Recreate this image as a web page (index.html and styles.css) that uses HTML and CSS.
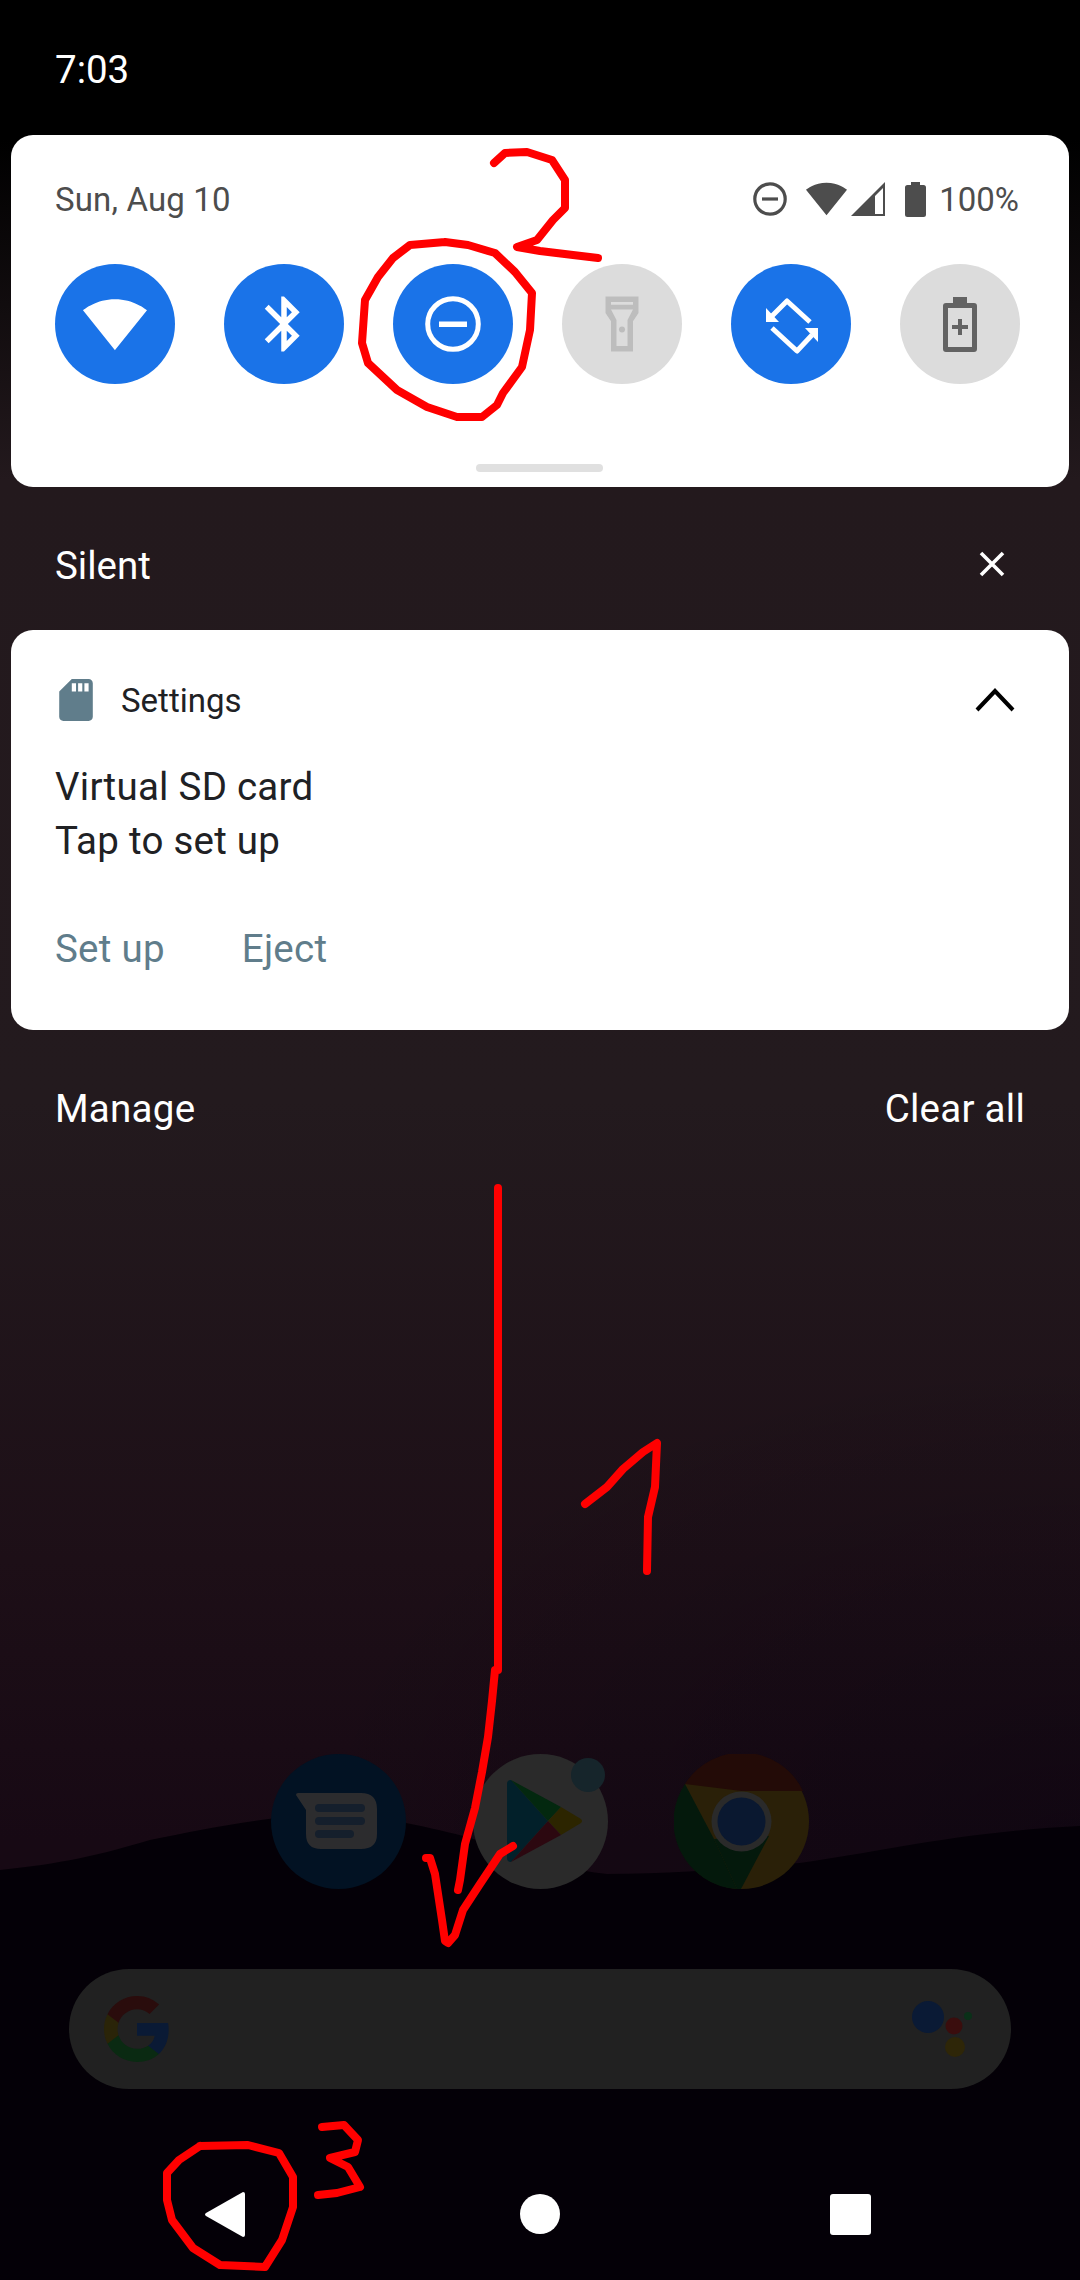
FILE: index.html
```html
<!doctype html>
<html>
<head>
<meta charset="utf-8">
<title>Notification shade</title>
<link rel="stylesheet" href="styles.css">
</head>
<body>
<svg class="wallpaper" viewBox="0 0 1080 2280">
  <path class="hill" d="M0 1870C60 1864 100 1855 150 1840C200 1830 260 1818 310 1815C360 1812 420 1825 463 1836C520 1852 560 1870 607 1874C680 1874 740 1868 800 1863C880 1852 960 1832 1080 1826V2280H0z"/>
</svg>

<div class="statusbar">7:03</div>

<section class="panel">
  <div class="panel-head">
    <span class="date">Sun, Aug 10</span>
    <div class="sysicons">
      <svg class="sys-dnd" viewBox="0 0 34 34"><circle cx="17" cy="17" r="15.2" fill="none" stroke="#4d4d4d" stroke-width="3.2"/><rect x="9" y="15.4" width="16" height="3.2" fill="#4d4d4d"/></svg>
      <svg class="sys-wifi" viewBox="0.36 3 23.28 18.5"><path fill="#4d4d4d" d="M12.01 21.49L23.64 7c-.45-.34-4.93-4-11.64-4C5.28 3 .81 6.66.36 7l11.64 14.5.01-.01z"/></svg>
      <svg class="sys-signal" viewBox="0 0 34 34"><path fill="#4d4d4d" fill-rule="evenodd" d="M34 0V34H0zM32 6L24 14V32H32z"/></svg>
      <svg class="sys-batt" viewBox="0 0 21 35"><path fill="#4d4d4d" d="M6 0h9v3h3.5q2.5 0 2.5 2.5V32.5q0 2.5-2.500 2.500H2.500Q0 35 0 32.500V5.500Q0 3 2.500 3H6z"/></svg>
      <span class="pct">100%</span>
    </div>
  </div>

  <div class="tiles">
    <div class="tile on">
      <svg viewBox="0 0 24 24"><path d="M12.010 21.490L23.640 7c-.45-.34-4.930-4-11.640-4C5.280 3 .81 6.660.36 7l11.640 14.500.01-.01z"/></svg>
    </div>
    <div class="tile on">
      <svg viewBox="0 0 24 24"><path d="M17.710 7.710L12 2h-1v7.590L6.410 5 5 6.410 10.590 12 5 17.590 6.410 19 11 14.410V22h1l5.710-5.710-4.300-4.290 4.300-4.290zM13 5.830l1.880 1.880L13 9.590V5.830zm1.880 10.460L13 18.170v-3.760l1.880 1.880z"/></svg>
    </div>
    <div class="tile on">
      <svg viewBox="0 0 66 66"><circle cx="33" cy="33" r="25.300" fill="none" stroke="#fff" stroke-width="5"/><rect x="19" y="30.500" width="28" height="5.500" fill="#fff"/></svg>
    </div>
    <div class="tile">
      <svg viewBox="0 0 24 24"><path fill="#bdbdbd" fill-rule="evenodd" d="M6 2h12v6l-2 3v11H8V11L6 8zM8 4v1h8V4zM8 6.700L10 10.500V20h4V10.500L16 6.700z"/><circle cx="12" cy="14" r="1.100" fill="#bdbdbd"/></svg>
    </div>
    <div class="tile on">
      <svg viewBox="0 0 66 66"><path fill="none" stroke="#fff" stroke-width="5" stroke-linejoin="round" d="M14 25L29 10L52 31M14 37L39 60L54 44"/><path fill="#fff" d="M8 17V31H21zM60 37V51L47 37z"/></svg>
    </div>
    <div class="tile">
      <svg viewBox="0 0 66 66"><path fill="#636363" fill-rule="evenodd" d="M26 6h14v6h7q3 0 3 3V58q0 3-3 3H19q-3 0-3-3V15q0-3 3-3h7zM21 17V56H45V17zM31 28h4v6h6v4h-6v6h-4v-6h-6v-4h6z"/></svg>
    </div>
  </div>
  <div class="handle"></div>
</section>

<div class="section-head">
  <span>Silent</span>
  <svg class="close" viewBox="0 0 26 26"><path d="M2 2L24 24M24 2L2 24" stroke="#fff" stroke-width="3.600" fill="none"/></svg>
</div>

<section class="card">
  <div class="card-app">
    <svg class="sd" viewBox="4 2 16 20"><path d="M18 2h-8L4.020 8 4 20c0 1.100.9 2 2 2h12c1.100 0 2-.9 2-2V4c0-1.100-.9-2-2-2zm-6 6h-2V4h2v4zm3 0h-2V4h2v4zm3 0h-2V4h2v4z"/></svg>
    <span class="app-name">Settings</span>
    <svg class="chevron" viewBox="0 0 40 24"><path d="M2 22L20 3L38 22" fill="none" stroke="#000" stroke-width="4"/></svg>
  </div>
  <div class="card-title">Virtual SD card</div>
  <div class="card-text">Tap to set up</div>
  <div class="card-actions">
    <span>Set up</span>
    <span>Eject</span>
  </div>
</section>

<div class="shade-foot">
  <span>Manage</span>
  <span>Clear all</span>
</div>

<div class="home">
  <div class="hotseat">
    <div class="app">
      <svg viewBox="0 0 135 135">
        <circle cx="67.500" cy="67.500" r="67.500" fill="#021223"/>
        <path fill="#2c2c2e" d="M27 39H90q16 0 16 16V80q0 15-16 15H50q-15 0-15-15V56L25 41q0-2 2-2z"/>
        <g fill="#151f2c"><rect x="44" y="50" width="50" height="8" rx="4"/><rect x="44" y="63" width="50" height="8" rx="4"/><rect x="44" y="76" width="39" height="8" rx="4"/></g>
      </svg>
    </div>
    <div class="app">
      <svg viewBox="0 0 135 135">
        <circle cx="67.500" cy="67.500" r="67.500" fill="#2a2a2a"/>
        <path fill="#02202a" d="M34 30Q34 26 38 26L75 67L38 108Q34 108 34 104z"/>
        <path fill="#03280f" d="M38 26L88 53L75 67z"/>
        <path fill="#2c2500" d="M88 53L108 65Q110 67 108 69L88 81L75 67z"/>
        <path fill="#2c0810" d="M88 81L38 108L75 67z"/>
      </svg>
      <span class="badge"></span>
    </div>
    <div class="app">
      <svg viewBox="0 0 135 135">
        <circle cx="67.500" cy="67.500" r="67.500" fill="#2a2008"/>
        <path fill="#230b07" d="M11 30A67.500 67.500 0 0 1 129 37H67.500z"/>
        <path fill="#04190c" d="M11 30L40 85L63 135A67.500 67.500 0 0 1 11 30z"/>
        <path fill="#04190c" d="M40 85L63 135L67 135L95 82z"/>
        <circle cx="67.500" cy="67.500" r="30" fill="#2a2a2a"/>
        <circle cx="67.500" cy="67.500" r="24" fill="#0a1830"/>
      </svg>
    </div>
  </div>

  <div class="search">
    <svg class="g" viewBox="2 2 44 44">
      <path fill="#0a1a35" d="M45.120 24.500c0-1.560-.14-3.060-.4-4.500H24v8.510h11.840c-.51 2.750-2.060 5.080-4.390 6.640v5.520h7.110c4.160-3.830 6.560-9.470 6.560-16.170z"/>
      <path fill="#0a2a12" d="M24 46c5.940 0 10.920-1.970 14.560-5.330l-7.110-5.520c-1.970 1.320-4.490 2.100-7.450 2.100-5.730 0-10.580-3.870-12.310-9.070H4.340v5.700C7.960 41.070 15.400 46 24 46z"/>
      <path fill="#2a2408" d="M11.690 28.180C11.250 26.860 11 25.450 11 24s.25-2.860.69-4.180v-5.700H4.340C2.850 17.090 2 20.450 2 24c0 3.550.85 6.910 2.340 9.880l7.350-5.700z"/>
      <path fill="#2a0c0c" d="M24 10.750c3.230 0 6.130 1.110 8.410 3.290l6.310-6.310C34.910 4.180 29.930 2 24 2 15.400 2 7.960 6.930 4.340 14.120l7.350 5.700c1.730-5.200 6.580-9.070 12.310-9.070z"/>
    </svg>
    <svg class="assistant" viewBox="0 0 60 64">
      <circle cx="16" cy="16" r="16" fill="#0a1a35"/>
      <circle cx="42" cy="25" r="8.500" fill="#3a0d0d"/>
      <circle cx="43" cy="46" r="10" fill="#2e2608"/>
      <circle cx="56" cy="15" r="4" fill="#0a3018"/>
    </svg>
  </div>

  <nav class="navbar">
    <svg class="nav-back" viewBox="0 0 40 45"><path fill="#fff" d="M38 0Q40 0 40 2V43Q40 45 38 45L1 24Q-1 22.500 1 21z"/></svg>
    <span class="nav-home"></span>
    <span class="nav-recent"></span>
  </nav>
</div>

<svg class="scribble" viewBox="0 0 1080 2280">
  <polyline points="498,1188 498,1670 495,1670 492,1701 488,1737 482,1772 475,1808 465,1844 460,1880 458,1890"/>
  <polyline points="513,1846 500,1854 480,1884 463,1910 455,1935 448,1943 445,1941 442,1920 435,1874 430,1858 426,1858"/>
  <polyline points="585,1504 607,1487 623,1469 643,1452 657,1443 655,1487 648,1517 647,1571"/>
  <polyline points="494,163 505,153 527,152 552,160 565,180 565,208 553,220 537,240 517,247 540,251 573,255 598,258"/>
  <polyline points="445,242 410,245 393,258 378,277 365,300 362,343 368,363 397,390 427,407 457,417 482,417 497,405 503,393 522,367 530,330 532,293 515,272 495,253 468,245 445,242"/>
  <polyline points="322,2127 344,2125 358,2140 355,2152 330,2158 348,2167 360,2187 337,2193 318,2195"/>
  <polyline points="200,2146 248,2145 279,2153 293,2177 293,2207 282,2240 265,2267 220,2265 193,2248 172,2220 167,2200 167,2173 179,2160 200,2146"/>
</svg>
</body>
</html>
```

FILE: styles.css
```css
html,
body {
    margin: 0;
    padding: 0;
}
body {
    position: relative;
    display: flex;
    flex-direction: column;
    width: 1080px;
    height: 2280px;
    overflow: hidden;
    font-family: Roboto, "Liberation Sans", sans-serif;
    color: #fff;
    background:
        radial-gradient(ellipse 800px 500px at 1080px 1850px, rgba(0, 0, 12, 0.3), rgba(0, 0, 12, 0)),
        linear-gradient(#000 0, #000 140px, #23191d 480px, #231a1e 1100px, #1d0f17 1560px, #170914 1840px);
}
.wallpaper,
.scribble {
    position: absolute;
    left: 0;
    top: 0;
    width: 1080px;
    height: 2280px;
}
.hill {
    fill: #040007;
}
.scribble {
    z-index: 5;
    fill: none;
    stroke: #ff0000;
    stroke-width: 8;
    stroke-linecap: round;
    stroke-linejoin: round;
}
.statusbar {
    position: relative;
    height: 135px;
    box-sizing: border-box;
    padding: 49px 0 0 55px;
    font-size: 38.500px;
    line-height: 42px;
    background: #000;
}

/* quick settings */
.panel {
    position: relative;
    height: 352px;
    margin: 0 11px;
    box-sizing: border-box;
    padding: 44px 49px 0 44px;
    border-radius: 22px;
    background: #fff;
}
.panel-head {
    display: flex;
    justify-content: space-between;
    align-items: center;
    height: 40px;
    color: #4d4d4d;
}
.date {
    font-size: 33px;
    letter-spacing: 0.15px;
}
.sysicons {
    display: flex;
    align-items: center;
    margin-right: 1px;
}
.sys-dnd {
    width: 34px;
    height: 34px;
    margin-right: 19px;
}
.sys-wifi {
    width: 41px;
    height: 34px;
    margin-right: 4px;
}
.sys-signal {
    width: 34px;
    height: 34px;
    margin-right: 20px;
}
.sys-batt {
    width: 21px;
    height: 35px;
    margin-right: 13px;
}
.pct {
    font-size: 33px;
}
.tiles {
    display: flex;
    justify-content: space-between;
    margin-top: 45px;
}
.tile {
    display: flex;
    align-items: center;
    justify-content: center;
    width: 120px;
    height: 120px;
    border-radius: 50%;
    background: #dcdcdc;
}
.tile.on {
    background: #1a73e8;
}
.tile svg {
    width: 66px;
    height: 66px;
    fill: #fff;
}
.handle {
    width: 127px;
    height: 8px;
    margin: 80px 0 0 421px;
    border-radius: 4px;
    background: #e0e0e0;
}

/* notification */
.section-head {
    position: relative;
    display: flex;
    justify-content: space-between;
    align-items: center;
    height: 143px;
    box-sizing: border-box;
    padding: 14px 75px 0 55px;
    font-size: 38.500px;
}
.close {
    width: 26px;
    height: 26px;
    margin-top: -4px;
}
.card {
    position: relative;
    height: 400px;
    margin: 0 11px;
    box-sizing: border-box;
    padding: 49px 44px 0;
    border-radius: 22px;
    background: #fff;
    color: #202124;
}
.card-app {
    display: flex;
    align-items: center;
    height: 42px;
}
.sd {
    width: 34px;
    height: 42px;
    margin-left: 4px;
    fill: #607d8b;
}
.app-name {
    margin-left: 28px;
    font-size: 33px;
}
.chevron {
    width: 40px;
    height: 24px;
    margin-left: auto;
    margin-right: 10px;
}
.card-title,
.card-text {
    font-size: 38.500px;
    line-height: 54px;
    letter-spacing: 0.25px;
}
.card-title {
    margin-top: 39px;
}
.card-actions {
    display: flex;
    gap: 77px;
    margin-top: 58px;
    font-size: 38.500px;
    letter-spacing: 0.25px;
    color: #607d8b;
}
.shade-foot {
    position: relative;
    display: flex;
    justify-content: space-between;
    padding: 58px 55px 0 55px;
    font-size: 38.500px;
    line-height: 42px;
    letter-spacing: 0.25px;
}

/* launcher under the shade */
.home {
    position: relative;
    margin-top: auto;
}
.hotseat {
    display: flex;
    justify-content: center;
    gap: 66.500px;
}
.app {
    position: relative;
    width: 135px;
    height: 135px;
}
.app svg {
    display: block;
    width: 135px;
    height: 135px;
}
.badge {
    position: absolute;
    left: 98px;
    top: 4px;
    width: 34px;
    height: 34px;
    border-radius: 50%;
    background: #16252b;
}
.search {
    display: flex;
    align-items: center;
    justify-content: space-between;
    height: 120px;
    margin: 80px 69px 0;
    padding: 0 39px 0 35px;
    border-radius: 60px;
    background: #212121;
}
.g {
    width: 66px;
    height: 66px;
}
.assistant {
    width: 60px;
    height: 64px;
    margin-top: 8px;
}
.navbar {
    display: flex;
    align-items: center;
    height: 191px;
    box-sizing: border-box;
    padding: 59px 0 0 205px;
}
.nav-back {
    width: 40px;
    height: 45px;
}
.nav-home {
    width: 40px;
    height: 40px;
    margin-left: 275px;
    border-radius: 50%;
    background: #fff;
}
.nav-recent {
    width: 41px;
    height: 41px;
    margin-left: 270px;
    border-radius: 3px;
    background: #fff;
}
```
